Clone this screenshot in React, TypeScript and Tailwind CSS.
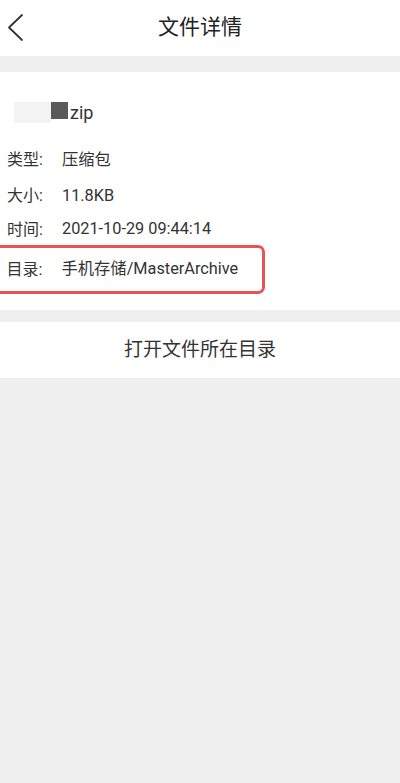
import React from "react";

const font = { fontFamily: 'Roboto, "Noto Sans CJK SC", sans-serif' };

function Row({ label, value, h }: { label: string; value: string; h: string }) {
  return (
    <div className={`flex items-center pl-[7px] text-[16px] text-[#333] ${h}`}>
      <span className="w-[55px]">{label}</span>
      <span className="text-[16.3px]">{value}</span>
    </div>
  );
}

export default function App() {
  return (
    <div className="w-[400px] min-h-[783px] bg-[#efefef] flex flex-col" style={font}>
      <div className="h-[56px] bg-white grid grid-cols-[56px_1fr_56px] items-center">
        <div className="flex items-center pl-[6px]">
          <svg width="20" height="30" viewBox="0 0 20 30" fill="none">
            <path d="M16 2 L3 14.5 L16 27" stroke="#333" strokeWidth="1.8" strokeLinecap="round" strokeLinejoin="round" />
          </svg>
        </div>
        <div className="text-center text-[21px] text-[#222]">文件详情</div>
        <div />
      </div>
      <div className="h-[16px]" />
      <div className="bg-white pt-[28px] pb-[16px] overflow-hidden">
        <div className="flex items-center h-[24px] pl-[14px] text-[18px] text-[#333]">
          <span className="w-[37px] h-[21px] bg-[#f3f3f3]" />
          <span className="w-[17px] h-[17px] bg-[#5a5a5a] -mt-[4px]" />
          <span className="ml-[2px]">zip</span>
        </div>
        <div className="h-[18px]" />
        <Row label="类型:" value="压缩包" h="h-[36px]" />
        <Row label="大小:" value="11.8KB" h="h-[36px]" />
        <Row label="时间:" value="2021-10-29 09:44:14" h="h-[31px]" />
        <div className="-ml-[10px] w-[275px] h-[49px] border-[3.5px] border-[#e6545a] rounded-[7px] flex items-center pl-[13.5px] text-[16px] text-[#333]">
          <span className="w-[55px]">目录:</span>
          <span className="text-[16.3px]">手机存储/MasterArchive</span>
        </div>
      </div>
      <div className="h-[12px]" />
      <div className="h-[56px] bg-white flex items-center justify-center text-[19px] text-[#333]">
        打开文件所在目录
      </div>
    </div>
  );
}
